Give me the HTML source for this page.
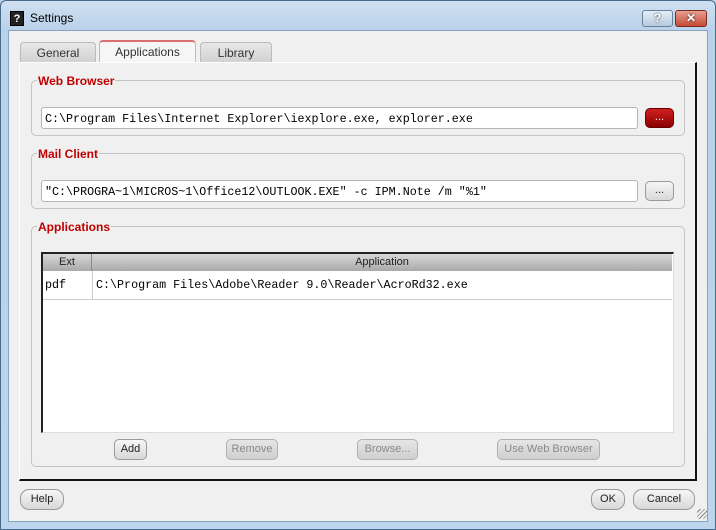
<!DOCTYPE html>
<html><head><style>
*{box-sizing:border-box;margin:0;padding:0}
body{width:716px;height:530px;overflow:hidden;background:#bcd3ea;font-family:"Liberation Sans",sans-serif;font-size:12px;position:relative}
.abs{position:absolute}
.win{left:0;top:0;width:716px;height:530px;border:1px solid #4a6a8a;border-radius:6px 6px 0 0;background:linear-gradient(#cfe0f1,#b9d1ea 30px,#bcd4ec)}
.client{left:8px;top:30px;width:700px;height:492px;background:#f0f0f0;border:1px solid #8aa3bd}
.grp{border:1px solid #c4c4c4;border-radius:5px}
.lg{color:#c00000;font-weight:bold;background:#f0f0f0;padding:0 1px;font-size:12px}
.fld{background:#fff;border:1px solid #b5b5b5;border-radius:3px;font-family:"Liberation Mono",monospace;font-size:11.7px;padding:4px 3px;white-space:nowrap}
.btn{border:1px solid #9a9a9a;border-radius:5px;background:linear-gradient(#f6f6f6,#d8d8d8);text-align:center;font-size:11px;line-height:19px;color:#222}
.dis{color:#8a8a8a;background:linear-gradient(#e6e6e6,#cfcfcf);border-color:#b0b0b0}
.tab{border:1px solid #bbb;border-bottom:none;border-radius:4px 4px 0 0;background:linear-gradient(#e8e8e8,#d0d0d0);text-align:center;line-height:20px;font-size:12px;color:#333}
</style></head><body>
<div class="abs win"></div>
<div class="abs" style="left:10px;top:11px;width:14px;height:15px;background:#222;border:1px solid #000;color:#fff;font-weight:bold;font-size:11px;text-align:center;line-height:14px">?</div>
<div class="abs" style="left:30px;top:11px;font-size:12px;color:#000">Settings</div>
<div class="abs" style="left:642px;top:10px;width:31px;height:17px;border:1px solid #6b7f96;border-radius:3px;background:linear-gradient(#e4eef8,#b5c9de);text-align:center;color:#fff;font-weight:bold;line-height:15px;text-shadow:0 0 2px #334">?</div>
<div class="abs" style="left:675px;top:10px;width:32px;height:17px;border:1px solid #7a2a22;border-radius:3px;background:linear-gradient(#e8a090,#c44a36);text-align:center;color:#fff;font-weight:bold;line-height:15px;text-shadow:0 0 2px #311">✕</div>
<div class="abs client"></div>
<div class="abs tab" style="left:20px;top:42px;width:76px;height:21px">General</div>
<div class="abs tab" style="left:99px;top:40px;width:97px;height:23px;background:#f6f6f6;border-top:2px solid #d87070;line-height:20px">Applications</div>
<div class="abs tab" style="left:200px;top:42px;width:72px;height:21px">Library</div>
<div class="abs" style="left:19px;top:62px;width:678px;height:419px;border-left:1px solid #fff;border-top:1px solid #fff;border-right:2px solid #111;border-bottom:2px solid #111;background:#f0f0f0"></div>

<div class="abs grp" style="left:31px;top:80px;width:654px;height:56px"></div>
<div class="abs lg" style="left:37px;top:74px">Web Browser</div>
<div class="abs fld" style="left:41px;top:107px;width:597px;height:22px">C:\Program Files\Internet Explorer\iexplore.exe, explorer.exe</div>
<div class="abs btn" style="left:645px;top:108px;width:29px;height:20px;background:linear-gradient(#d02020,#8a0000);border-color:#600;color:#fff;line-height:16px">...</div>

<div class="abs grp" style="left:31px;top:153px;width:654px;height:56px"></div>
<div class="abs lg" style="left:37px;top:147px">Mail Client</div>
<div class="abs fld" style="left:41px;top:180px;width:597px;height:22px">"C:\PROGRA~1\MICROS~1\Office12\OUTLOOK.EXE" -c IPM.Note /m "%1"</div>
<div class="abs btn" style="left:645px;top:181px;width:29px;height:20px;line-height:16px">...</div>

<div class="abs grp" style="left:31px;top:226px;width:654px;height:241px"></div>
<div class="abs lg" style="left:37px;top:220px">Applications</div>
<div class="abs" style="left:41px;top:252px;width:633px;height:181px;background:#fff;border-top:2px solid #222;border-left:2px solid #222;border-right:1px solid #ddd;border-bottom:1px solid #ddd"></div>
<div class="abs" style="left:43px;top:254px;width:629px;height:17px;background:linear-gradient(#d8d8d8,#a9a9a9);font-size:11px;color:#222;line-height:17px">
<span class="abs" style="left:0;width:49px;text-align:center;border-right:1px solid #888;height:17px">Ext</span>
<span class="abs" style="left:49px;width:580px;text-align:center">Application</span></div>
<div class="abs" style="left:43px;top:271px;width:629px;height:29px;border-bottom:1px solid #ccc;font-family:'Liberation Mono',monospace;font-size:11.7px;line-height:29px">
<span class="abs" style="left:2px">pdf</span>
<span class="abs" style="left:49px;top:0;height:29px;border-left:1px solid #ccc"></span>
<span class="abs" style="left:53px">C:\Program Files\Adobe\Reader 9.0\Reader\AcroRd32.exe</span></div>

<div class="abs btn" style="left:114px;top:439px;width:33px;height:21px">Add</div>
<div class="abs btn dis" style="left:226px;top:439px;width:52px;height:21px">Remove</div>
<div class="abs btn dis" style="left:357px;top:439px;width:61px;height:21px">Browse...</div>
<div class="abs btn dis" style="left:497px;top:439px;width:103px;height:21px">Use Web Browser</div>

<div class="abs btn" style="left:20px;top:489px;width:44px;height:21px;border-radius:9px">Help</div>
<div class="abs btn" style="left:591px;top:489px;width:34px;height:21px;border-radius:9px">OK</div>
<div class="abs btn" style="left:633px;top:489px;width:62px;height:21px;border-radius:9px">Cancel</div>
<div class="abs" style="left:697px;top:509px;width:10px;height:10px;background:repeating-linear-gradient(135deg,transparent 0 2px,#888 2px 3px)"></div>
</body></html>
